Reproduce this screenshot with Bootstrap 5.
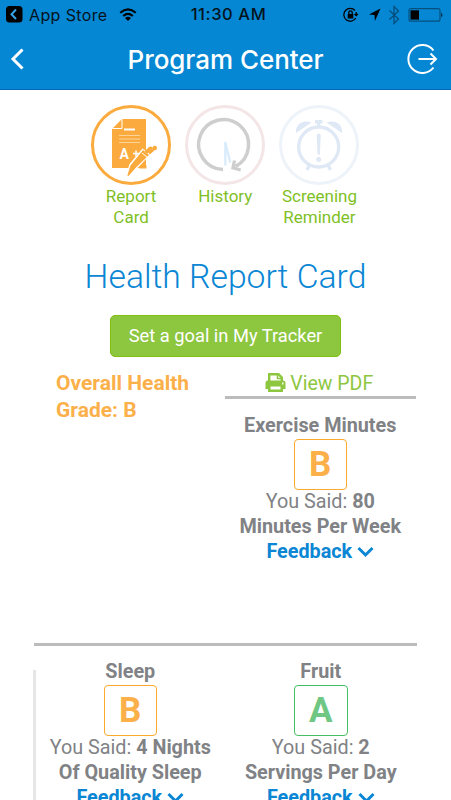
<!DOCTYPE html>
<html lang="en">
<head>
<meta charset="utf-8">
<meta name="viewport" content="width=device-width, initial-scale=1">
<title>Program Center</title>
<link href="https://cdn.jsdelivr.net/npm/bootstrap@5.3.0/dist/css/bootstrap.min.css" rel="stylesheet">
<style>
body{font-family:Roboto,sans-serif;height:800px;overflow:hidden;color:#808285;background:#fff}
svg{flex-shrink:0}
.app-top{background:#0587d3;height:90px;border-bottom:1px solid #0568b4;font-family:Inter,sans-serif}
.status-bar{height:29px;color:#06131d;display:grid;grid-template-columns:1fr auto 1fr;padding:0 8px 0 6px}
.status-bar .from-app{font-size:16px;letter-spacing:.38px;line-height:28px}
.status-bar .app-name{padding:0 11px 0 6px}
.status-bar .clock{font-size:16.500px;font-weight:500;letter-spacing:.6px;line-height:29px;padding-left:8px}
.title-bar{height:60px;color:#fff;padding:0 13px 0 9px}
.title-bar h1{font-size:26px;font-weight:500;line-height:61px;margin:0;padding-left:4px;letter-spacing:-.05px}
.program-nav{padding:15px 0 0 84px;height:138px}
.program-nav a{width:94.2px;color:#7fbf26;text-decoration:none;font-size:17px;line-height:21px;text-align:center}
.program-nav svg{display:block;margin:0 auto 1px}
.page-title{font-size:33.700px;font-weight:300;color:#0a86d4;line-height:40px;margin:29px 0 0;text-align:center;white-space:nowrap}
.goal-btn{background:#8dc63f;border:1px solid #7fbf0f;color:#fff;border-radius:5px;width:231px;height:42px;font-size:18.3px;line-height:26px;padding:6px 0;margin:18px 0 0 110px;white-space:nowrap}
.report-grid{margin:13px 34px 0;width:383px}
.overall{font-size:21px;line-height:27px;font-weight:700;color:#fbb04a;padding-left:22px;width:191px}
.pdf-link{color:#8dc63f;font-size:19.5px;line-height:27px;height:29px;border-bottom:3px solid #bcbcbc;text-decoration:none;white-space:nowrap;padding-right:2px}
.metric{width:190.5px;text-align:center;font-size:19.8px;line-height:25px;white-space:nowrap}
.metric-first{padding-top:14px}
.grade{width:53px;height:51px;border:1px solid #fbaa2b;border-radius:4px;color:#fbb04a;font-size:35px;font-weight:700;line-height:49px;margin:1px auto -1px}
.grade-a{border-color:#44bf64;color:#70c783;width:54px}
.feedback{color:#0a86d4;font-weight:700;text-decoration:none}
.feedback svg{margin-bottom:2px}
.second-row{border-top:3px solid #bcbcbc;height:170px;padding-top:13px}
.first-row{height:273px}
.side-rule{border-left:3px solid #e6e6e6;margin:11px -1px 0 -1px;width:3px;height:150px}
</style>
</head>
<body>
<header class="app-top">
  <div class="status-bar">
    <div class="from-app d-flex align-items-center">
      <svg width="17" height="17" viewBox="0 0 17 17"><rect width="16.500" height="16.500" rx="3.500" fill="#000"/><path d="M10 3.500 5.500 8.200 10 13" fill="none" stroke="#35a5e6" stroke-width="2"/></svg>
      <span class="app-name">App Store</span>
      <svg width="19" height="14" viewBox="0 0 19 14"><g fill="none" stroke="#000" stroke-width="2"><path d="M1.200 4.800Q9-2 16.800 4.800M4.200 8Q9 3.800 13.800 8"/></g><path d="m9 13-3-3q3-2.300 6 0z"/></svg>
    </div>
    <div class="clock">11:30 AM</div>
    <div class="d-flex justify-content-end align-items-center">
      <svg width="100" height="20" viewBox="0 0 100 20"><g fill="none" stroke="#000" stroke-width="1.300"><path d="M12 5.500A6.400 6.400 0 1 0 12.800 13"/><path d="M13.200 11V7"/><path d="M5.800 9V7.500a1.700 1.700 0 0 1 3.400 0V9"/></g><rect x="4.700" y="9" width="5.600" height="4.500" rx=".5"/><path d="m10.800 9 5-.2-2.500 2.700zM37.500 3.500 26 9.600l5.500.4.400 6z"/><path d="m46.500 5.500 9 8.500-4.500 4.500V1.500L55.500 6l-9 8.500" fill="none" stroke="#064e7c" stroke-width="1.300"/><rect x="66" y="3.700" width="31" height="12.500" rx="2" fill="none" stroke="#06507f" stroke-width="1.200"/><rect x="67.500" y="5.300" width="8.500" height="9.300"/><path d="M98 7.500q3 2.500 0 5z" fill="#063551"/></svg>
    </div>
  </div>
  <div class="title-bar d-flex align-items-center justify-content-between">
    <svg width="32" height="24" viewBox="0 0 32 24"><path d="M13.500 2.500 4 12l9.500 9.500" fill="none" stroke="#fff" stroke-width="3"/></svg>
    <h1>Program Center</h1>
    <svg width="32" height="32" viewBox="0 0 32 32"><path d="M27.500 7.500A14 14 0 1 0 27.500 24.500M12.500 16H30M24.500 10.500 30 16l-5.500 5.500" fill="none" stroke="#fff" stroke-width="2"/></svg>
  </div>
</header>
<main>
  <nav class="program-nav d-flex">
    <a href="#">
      <svg width="80" height="80" viewBox="0 0 80 80"><circle cx="40" cy="40" r="38.500" fill="none" stroke="#fbaa3d" stroke-width="3"/><path d="M31 14H55V63H21V24z" fill="#fbaa3d"/><path d="M21.500 23.500H31V14" fill="none" stroke="#fff"/><path d="M33 24.500H44" stroke="#fff" stroke-width="2"/><path d="M28 30.500H49M28 34H49M28 37.500H49" stroke="#fdd39c"/><text x="28.500" y="54" fill="#fff" font-size="14" font-weight="700">A</text><path d="M42 48.500h6m-3-3v6" stroke="#fff" stroke-width="1.500"/><path d="m35 70.500 3.500-11.500 13-15.500 8 6L46.500 63z" fill="#fff"/><path d="m36.300 70.500 3.200-10L52 45l6 5L45 62.500l-7.500 8.500z" fill="#fbaa3d"/><path d="M55 47.500 59 43.500" stroke="#fbaa3d" stroke-width="3.500"/><circle cx="59.500" cy="43.800" r="2.200" fill="#fbaa3d"/><circle cx="63.700" cy="43" r="2.300" fill="#fbaa3d"/><path d="M58 48.500 63 44" stroke="#fbaa3d" stroke-width="2.500"/><path d="m51 48 5 4" stroke="#fff"/><path d="M48 63.500 54 59.500l1.500 1v3z" fill="#fbaa3d"/></svg>
      Report<br>Card
    </a>
    <a href="#">
      <svg width="80" height="80" viewBox="0 0 80 80"><circle cx="40" cy="40" r="38.500" fill="none" stroke="#f4e5e6" stroke-width="3"/><path d="M38 64.500A25 25 0 1 1 50.500 61.500" fill="none" stroke="#cecece" stroke-width="3.500"/><path d="M49.500 55.500 48 62.800 55.700 65" fill="none" stroke="#cecece" stroke-width="3.300"/><path d="M40.300 60.500V37L45.200 57.500" fill="none" stroke="#d8ecfc" stroke-width="2.300"/></svg>
      History
    </a>
    <a href="#">
      <svg width="80" height="80" viewBox="0 0 80 80"><circle cx="40" cy="40" r="38.500" fill="none" stroke="#edf3f9" stroke-width="3"/><g fill="none" stroke="#dfe8f5" stroke-width="3.300"><circle cx="39.700" cy="42" r="20"/><path d="M39.700 18v4M30.500 60l-2.500 5M49 60l2.500 5"/></g><path d="M36 15h7.500v3.500H36zM17 28c-1-8 6-14 15.500-10.500zM63 28c1-8-6-14-15.500-10.500zM37.700 30q2-3 4 0l-.8 19.500h-2.400z" fill="#dfe8f5"/><circle cx="39.700" cy="54.500" r="2.500" fill="#dfe8f5"/></svg>
      Screening<br>Reminder
    </a>
  </nav>
  <h2 class="page-title">Health Report Card</h2>
  <button class="btn goal-btn">Set a goal in My Tracker</button>
  <section class="report-grid">
    <div class="first-row d-flex">
      <div class="overall">Overall Health<br>Grade: B</div>
      <div>
        <a href="#" class="pdf-link d-flex align-items-start justify-content-center">
          <svg class="me-1" width="21" height="22" viewBox="0 -3 21 22"><path d="M4.200 9V1.200h9.300L16.800 4.500V9" fill="none" stroke="#8dc63f" stroke-width="2.400"/><path fill-rule="evenodd" d="M2.500 7.500H18q2.500 0 2.500 2.500V16H18v3H3v-3H.5V10Q.5 7.500 2.500 7.500zM5.500 13.500v3h10v-3zM17 9.500v2h1.500v-2z" fill="#8dc63f"/><path d="M12.500 1v4.500h4" fill="none" stroke="#8dc63f" stroke-width="1.500"/></svg>
          <span>View PDF</span>
        </a>
        <div class="metric metric-first"><b>Exercise Minutes</b><div class="grade">B</div>You Said: <b>80</b><br><b>Minutes Per Week</b><br><a class="feedback" href="#">Feedback <svg width="17" height="12" viewBox="0 0 17 12"><path d="m1.500 2 7 7 7-7" fill="none" stroke="#0a86d4" stroke-width="3"/></svg></a></div>
      </div>
    </div>
    <div class="second-row d-flex">
      <div class="side-rule"></div>
      <div class="metric"><b>Sleep</b><div class="grade">B</div>You Said: <b>4 Nights</b><br><b>Of Quality Sleep</b><br><a class="feedback" href="#">Feedback <svg width="17" height="12" viewBox="0 0 17 12"><path d="m1.500 2 7 7 7-7" fill="none" stroke="#0a86d4" stroke-width="3"/></svg></a></div>
      <div class="metric"><b>Fruit</b><div class="grade grade-a">A</div>You Said: <b>2</b><br><b>Servings Per Day</b><br><a class="feedback" href="#">Feedback <svg width="17" height="12" viewBox="0 0 17 12"><path d="m1.500 2 7 7 7-7" fill="none" stroke="#0a86d4" stroke-width="3"/></svg></a></div>
    </div>
  </section>
</main>
<script src="https://cdn.jsdelivr.net/npm/bootstrap@5.3.0/dist/js/bootstrap.bundle.min.js"></script>
</body>
</html>
